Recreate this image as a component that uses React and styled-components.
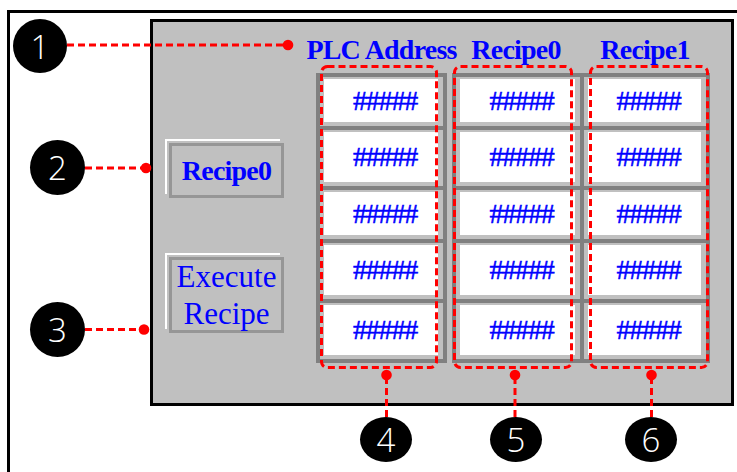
import React from 'react'
import styled, { createGlobalStyle } from 'styled-components'

const GlobalStyle = createGlobalStyle`
  html, body {
    margin: 0;
    padding: 0;
    background: #fff;
    overflow: hidden;
  }
  body {
    font-family: "Liberation Serif", "Times New Roman", serif;
  }
`;

const Page = styled.div`
  position: relative;
  width: 737px;
  height: 472px;
  overflow: hidden;
`;

const Frame = styled.div`
  box-sizing: border-box;
  margin: 10px 0 0 7px;
  height: 462px;
  border-top: 3px solid #000;
  border-left: 3px solid #000;
  padding: 6px 0 0 140px;
`;

const Panel = styled.div`
  box-sizing: border-box;
  width: 584px;
  height: 387px;
  border: 3px solid #000;
  background: #c0c0c0;
  display: flex;
  align-items: flex-start;
  padding: 15px 0 0 16px;
`;

const LeftCol = styled.div`
  display: flex;
  flex-direction: column;
  width: 115px;
  padding-top: 106px;
  gap: 59px;
`;

const HmiButton = styled.div`
  box-sizing: border-box;
  height: ${p => p.$h}px;
  border: 3px solid #969696;
  background: #c0c0c0;
  color: #0000ff;
  display: flex;
  align-items: center;
  justify-content: center;
  text-align: center;
  font-size: ${p => p.$size}px;
  font-weight: ${p => (p.$bold ? 700 : 400)};
  letter-spacing: ${p => (p.$bold ? '-0.8px' : 'normal')};
  line-height: ${p => p.$lh}px;
  box-shadow: -2px -2px 0 #c0c0c0, -4px -4px 0 #fff;
`;

const Table = styled.div`
  display: flex;
  align-items: flex-start;
  margin-left: 32px;
`;

const Column = styled.div`
  width: ${p => p.$w}px;
  margin-right: ${p => p.$after}px;
  display: flex;
  flex-direction: column;
`;

const Header = styled.div`
  display: flex;
  justify-content: center;
  height: 26px;
  line-height: 26px;
  margin-bottom: 10px;
  font-size: 28px;
  font-weight: 700;
  letter-spacing: -0.8px;
  color: #0000ff;
  white-space: nowrap;
`;

const Stack = styled.div`
  display: flex;
  flex-direction: column;
  border-left: 4px solid #808080;
  border-bottom: 4px solid #808080;
  border-right: ${p => (p.$closed ? '4px solid #808080' : 'none')};
`;

const Cell = styled.div`
  box-sizing: border-box;
  height: ${p => p.$h}px;
  border-top: 4px solid #808080;
  padding: 2px 5px 4px 4px;
  display: flex;
`;

const Field = styled.div`
  flex: 1;
  background: #fff;
  display: flex;
  align-items: center;
  justify-content: center;
  padding-left: 8px;
  color: #0000ff;
  font-size: 28px;
  letter-spacing: -1.2px;
  -webkit-text-stroke: 0.5px #0000ff;
  white-space: nowrap;
`;

const Overlay = styled.svg`
  position: absolute;
  left: 0;
  top: 0;
  pointer-events: none;
`;

const Badge = styled.div`
  position: absolute;
  left: ${p => p.$x}px;
  top: ${p => p.$y}px;
  width: ${p => p.$w}px;
  height: ${p => p.$h}px;
  border-radius: 50%;
  background: #000;
  color: #fff;
  display: flex;
  align-items: center;
  justify-content: center;
  font-family: "Open Sans", "DejaVu Sans", sans-serif;
  font-size: 33px;
  font-weight: 300;
  line-height: 1;
`;

const rowHeights = [53, 60, 53, 60, 60];

const columns = [
  { title: 'PLC Address', w: 131, after: 5, closed: true },
  { title: 'Recipe0', w: 128, after: 0, closed: false },
  { title: 'Recipe1', w: 130, after: 0, closed: true },
];

const badges = [
  { n: 1, x: 13, y: 19, w: 54, h: 54 },
  { n: 2, x: 30, y: 140, w: 55, h: 55 },
  { n: 3, x: 30, y: 302, w: 55, h: 55 },
  { n: 4, x: 360, y: 417, w: 52, h: 45 },
  { n: 5, x: 490, y: 417, w: 52, h: 45 },
  { n: 6, x: 625, y: 417, w: 52, h: 45 },
];

// leader lines: [x1, y1, x2, y2], dot at the far end
const leaders = [
  [67, 45, 288, 45],
  [85, 168, 146, 168],
  [85, 329.5, 144, 329.5],
  [386.5, 417, 386.5, 375],
  [515, 417, 515, 375],
  [651.5, 417, 651.5, 375],
];

const frames = [
  { x: 321.5, w: 115 },
  { x: 454.5, w: 117 },
  { x: 590.5, w: 117 },
];

const Callouts = () => (
  <Overlay width="737" height="472" viewBox="0 0 737 472">
    {frames.map(f => (
      <rect key={f.x} x={f.x} y="66.5" width={f.w} height="301" rx="6"
        fill="none" stroke="#ff0000" strokeWidth="3" strokeDasharray="7 4" />
    ))}
    {leaders.map(([x1, y1, x2, y2], i) => (
      <g key={i}>
        <line x1={x1} y1={y1} x2={x2} y2={y2}
          stroke="#ff0000" strokeWidth="3" strokeDasharray="7 4" />
        <circle cx={x2} cy={y2} r="5.3" fill="#ff0000" />
      </g>
    ))}
  </Overlay>
);

const App = () => {
  return (
    <Page>
      <GlobalStyle />
      <Frame>
        <Panel>
          <LeftCol>
            <HmiButton $h={55} $size={28} $lh={30} $bold>Recipe0</HmiButton>
            <HmiButton $h={76} $size={31} $lh={37}>Execute<br />Recipe</HmiButton>
          </LeftCol>
          <Table>
            {columns.map(col => (
              <Column key={col.title} $w={col.w} $after={col.after}>
                <Header>{col.title}</Header>
                <Stack $closed={col.closed}>
                  {rowHeights.map((h, i) => (
                    <Cell key={i} $h={h}>
                      <Field>#####</Field>
                    </Cell>
                  ))}
                </Stack>
              </Column>
            ))}
          </Table>
        </Panel>
      </Frame>
      <Callouts />
      {badges.map(b => (
        <Badge key={b.n} $x={b.x} $y={b.y} $w={b.w} $h={b.h}>{b.n}</Badge>
      ))}
    </Page>
  )
}

export default App
